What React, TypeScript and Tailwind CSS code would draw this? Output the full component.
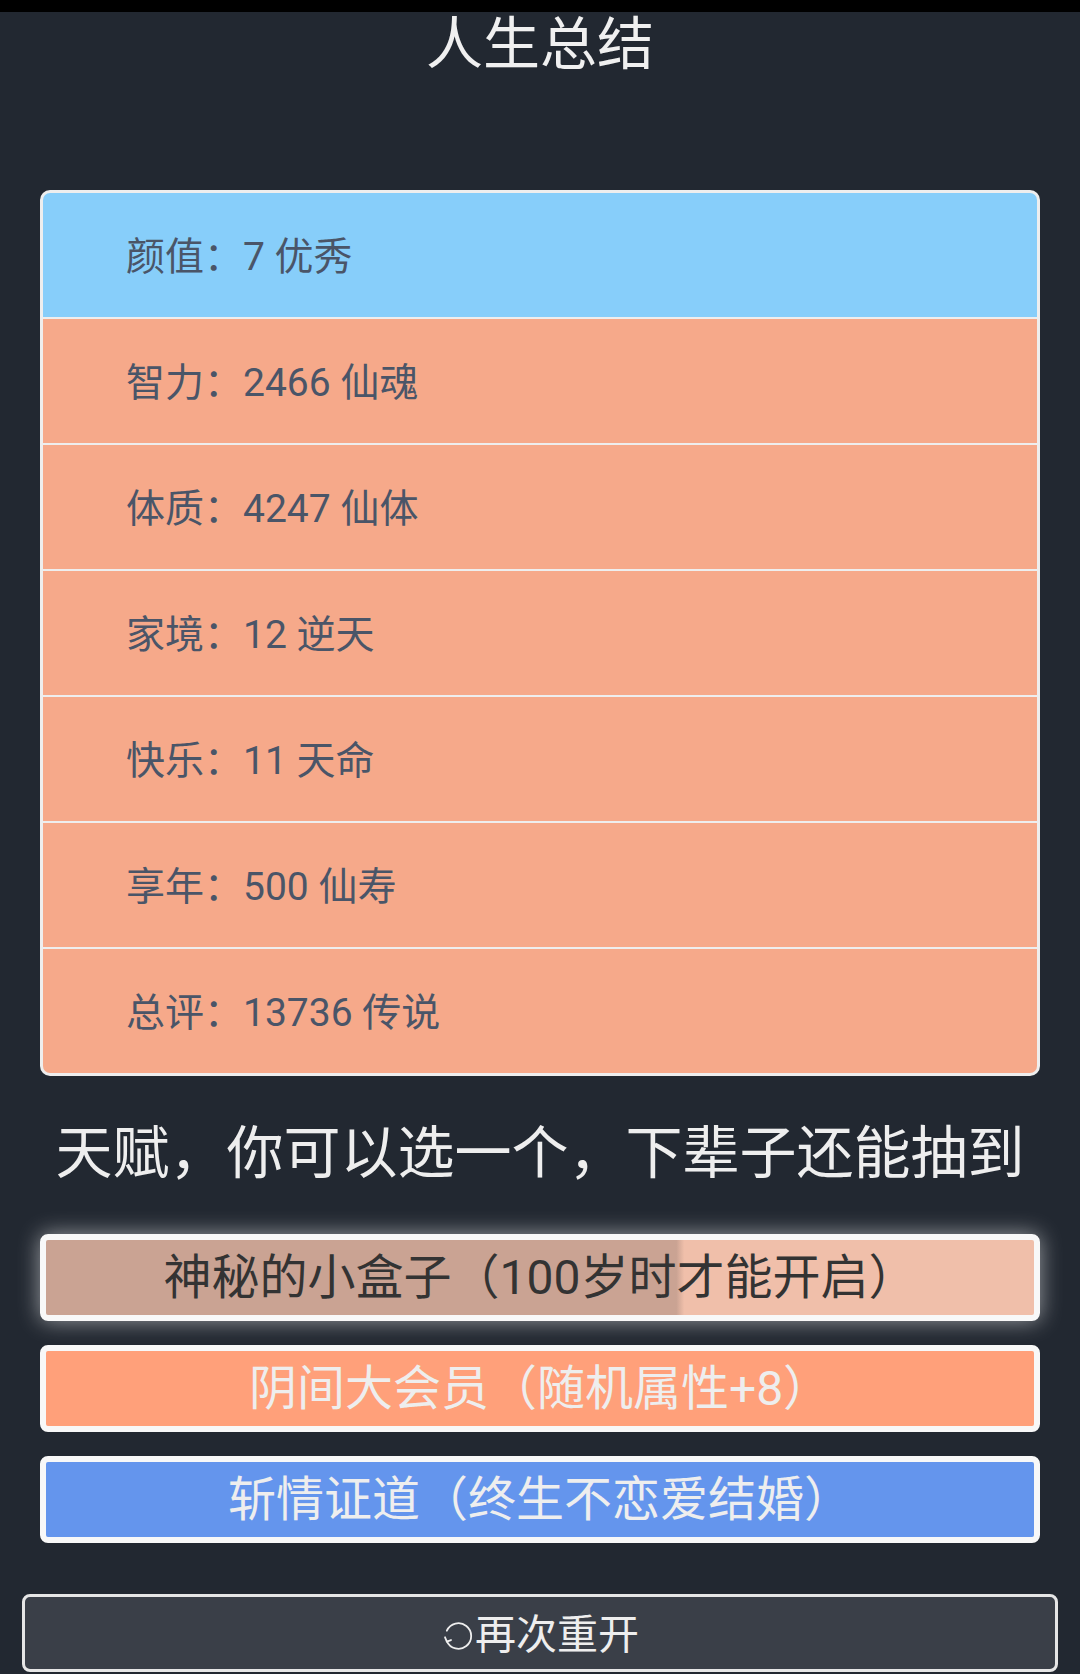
const font = { fontFamily: 'Roboto, "Noto Sans CJK SC", sans-serif' };

const stats = [
  { label: '颜值', value: '7 优秀', color: 'bg-[#87cefa]' },
  { label: '智力', value: '2466 仙魂', color: 'bg-[#f6a98a]' },
  { label: '体质', value: '4247 仙体', color: 'bg-[#f6a98a]' },
  { label: '家境', value: '12 逆天', color: 'bg-[#f6a98a]' },
  { label: '快乐', value: '11 天命', color: 'bg-[#f6a98a]' },
  { label: '享年', value: '500 仙寿', color: 'bg-[#f6a98a]' },
  { label: '总评', value: '13736 传说', color: 'bg-[#f6a98a]' },
];

function RestartIcon() {
  return (
    <svg viewBox="0 0 32 32" className="h-[34px] w-[34px]" fill="none" stroke="#eeeeee" strokeWidth="1.7" strokeLinecap="round" strokeLinejoin="round">
      <path d="M5.5 11 A12 12 0 1 1 5.5 21" />
      <path d="M3.8 17.2 L5.5 21.2 L9.4 19.8" />
    </svg>
  );
}

export default function App() {
  return (
    <main className="min-h-[1674px] w-full bg-[#222831]" style={font}>
      <div className="h-[12px] bg-black" />
      <h1 className="h-[66px] text-center text-[57px] leading-[66px] font-normal text-[#f0f0f0]">人生总结</h1>

      <section className="mx-[40px] mt-[112px] overflow-hidden rounded-[10px] border-[3px] border-[#eeeeee] bg-[#eeeeee]">
        <div className="flex flex-col gap-[2px]">
          {stats.map((s) => (
            <div key={s.label} className={`flex h-[124px] items-center pl-[83px] pt-[4px] text-[39px] text-[#4a5568] ${s.color}`}>
              {s.label}：{s.value}
            </div>
          ))}
        </div>
      </section>

      <h2 className="mt-[38px] h-[80px] text-center text-[57px] leading-[80px] font-normal text-[#eeeeee]">
        天赋，你可以选一个，下辈子还能抽到
      </h2>

      <div className="mx-[40px] mt-[40px] flex flex-col gap-[24px]">
        <div className="h-[87px] rounded-[8px] border-[6px] border-[#f8f8f8] bg-[linear-gradient(to_right,#caa393_63.8%,#f0bfaa_64.6%)] shadow-[0_0_22px_rgba(255,255,255,0.55)]">
          <div className="flex h-full items-center justify-center text-[48px] text-[#333333]">神秘的小盒子（100岁时才能开启）</div>
        </div>
        <div className="flex h-[87px] items-center justify-center rounded-[8px] border-[6px] border-[#f8f8f8] bg-[#ffa07a] text-[48px] text-[#eeeeee]">
          阴间大会员（随机属性+8）
        </div>
        <div className="flex h-[87px] items-center justify-center rounded-[8px] border-[6px] border-[#f8f8f8] bg-[#6495ed] text-[48px] text-[#eeeeee]">
          斩情证道（终生不恋爱结婚）
        </div>
      </div>

      <button className="mx-[22px] mt-[51px] flex h-[78px] w-[1036px] items-center justify-center rounded-[8px] border-[3px] border-[#e6e6e6] bg-[#3a3f48] pt-[6px] text-[41px] text-[#eeeeee]">
        <RestartIcon />
        <span>再次重开</span>
      </button>
    </main>
  );
}
